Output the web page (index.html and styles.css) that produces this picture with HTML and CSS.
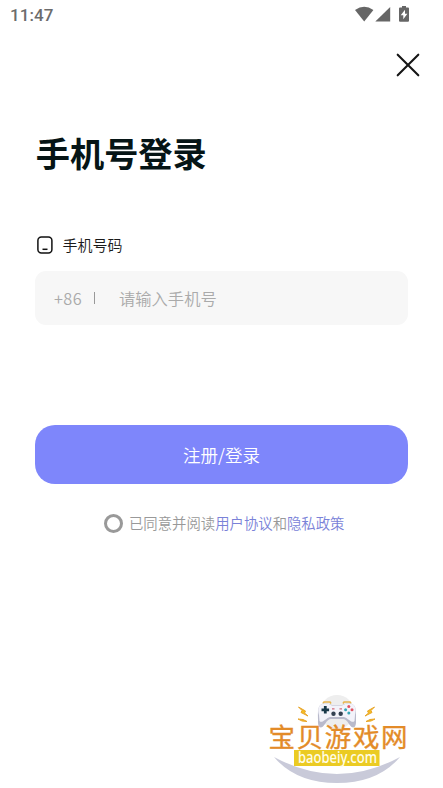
FILE: index.html
```html
<!DOCTYPE html>
<html lang="zh-CN">
<head>
<meta charset="utf-8">
<title>手机号登录</title>
<link rel="stylesheet" href="styles.css">
</head>
<body>
<main class="screen">
  <header class="status">
    <span class="time">11:47</span>
    <svg class="indicators" width="56" height="18" viewBox="0 0 56 18" fill="#666">
      <path d="M0 4.100Q9.200-2.600 18.400 4.100L9.200 15.600Z"/>
      <path d="M20.300 15.600L35.200 .9V15.600Z"/>
      <path d="M47 0h4v1.500h2q1 0 1 1v12.200q0 1-1 1h-8q-1 0-1-1V2.500q0-1 1-1h2z"/>
      <path d="M50 3.700L45.700 9.200H48.300V13.300L52.400 7.800H50Z" fill="#fff"/>
    </svg>
  </header>
  <button class="close" aria-label="关闭">
    <svg width="24" height="24" viewBox="0 0 24 24"><path d="M1.700 1.700L22.300 22.300M22.300 1.700L1.700 22.300" stroke="#161616" stroke-width="2.100" stroke-linecap="round"/></svg>
  </button>
  <h1 class="title">手机号登录</h1>
  <div class="label">
    <svg width="18" height="20" viewBox="0 0 18 20" fill="none" stroke="#111" stroke-width="1.500"><rect x="1.900" y="1.900" width="14" height="16" rx="3.500"/><path d="M6.500 14.300h5"/></svg>
    <span>手机号码</span>
  </div>
  <div class="field">
    <span class="prefix">+86</span>
    <span class="divider"></span>
    <span>请输入手机号</span>
  </div>
  <button class="submit">注册/登录</button>
  <div class="terms">
    <span class="radio"></span>
    <span>已同意并阅读<a>用户协议</a>和<a>隐私政策</a></span>
  </div>
  <svg class="watermark" width="150" height="98" viewBox="265 690 150 98">
    <path d="M274 757Q337 791 400 757Q378 783 337 783Q296 783 274 757Z" fill="#c9cad9"/>
    <circle cx="337" cy="712" r="17" fill="#eee"/>
    <path d="M323 703.500l1-1.500h6l1 1.500M343 703.500l1-1.500h6l1 1.500" stroke="#e8b44c" stroke-width="1.600" fill="none"/>
    <path d="M324 703.500C317 704 318 712 318 720C317.500 728 321 730 325 724Q328 719 331 719H343Q346 719 349 724C353 730 356.500 728 356 720C356 712 357 704 350 703.500Q345 703 342 705H332Q329 703 324 703.500Z" fill="#b9bacb"/>
    <path d="M325 703.500C318 703.500 317.500 710 319 715L319.500 721C322 724 326 718 330 717H344C348 718 352 724 354.500 721L355 715C356.500 710 356 703.500 349 703.500Q345 703.500 342 705.500H332Q329 703.500 325 703.500Z" fill="#f3f3fa"/>
    <path d="M325.300 706v7.600M321.500 709.800h7.600" stroke="#183848" stroke-width="2.800"/>
    <g fill="#334151"><circle cx="333.500" cy="713.800" r="2.200"/><circle cx="340.700" cy="713.800" r="2.200"/></g>
    <path d="M332 708.800h2.500M339.500 708.800h2.500" stroke="#d46a78" stroke-width="1.200"/>
    <g fill="#e35261"><circle cx="348.800" cy="706.500" r="1.500"/><circle cx="352" cy="709.800" r="1.500"/></g>
    <g fill="#36a6b6"><circle cx="345.600" cy="709.800" r="1.500"/><circle cx="348.800" cy="713" r="1.500"/></g>
    <path d="M298.500 707l7 4-1 2 3.500 3-7-3.500 1-2zM298 719l5 .5 4 2-5-.5zM374.500 707l-7 4 1 2-3.500 3 7-3.500-1-2zM375 719l-5 .5-4 2 5-.5z" fill="#f4bd22" stroke="#e9a62b" stroke-width="1"/>
    <text class="brand" x="268.500" y="746.500" textLength="139" lengthAdjust="spacing">宝贝游戏网</text>
    <rect x="294" y="750" width="85.500" height="16" fill="#ebcb23"/>
    <text class="domain" x="298" y="762.500" textLength="79" lengthAdjust="spacingAndGlyphs">baobeiy.com</text>
  </svg>
</main>
</body>
</html>
```
FILE: styles.css
```css
* { box-sizing: border-box; }
body { margin: 0; background: #fff; font-family: "Noto Sans CJK SC", sans-serif; font-weight: 350; }
.screen { position: relative; height: 788px; display: flex; flex-direction: column; padding: 0 35px; overflow: hidden; }
button { border: 0; padding: 0; font-family: inherit; font-weight: inherit; }
.status { height: 30px; margin: 0 -2px 0 -25px; display: flex; justify-content: space-between; align-items: center; flex: none; }
.time { font: 500 17px/20px Roboto, sans-serif; color: #6c6c6c; letter-spacing: .1px; }
.indicators { margin: 0 -1px 1px 0; }
.close { width: 24px; height: 24px; margin: 23px -11.500px 0 0; align-self: flex-end; background: none; }
.close svg { display: block; }
.title { margin: 50px 0 0 .8px; font-size: 34.200px; line-height: 50px; font-weight: 700; color: #061516; }
.label { display: flex; align-items: center; gap: 9px; margin: 58px 0 0 .5px; height: 20px; font-size: 15px; line-height: 20px; color: #1a1a1a; }
.field { display: flex; align-items: center; height: 54px; margin-top: 16px; padding-left: 19px; border-radius: 11px; background: #f7f7f7; color: #aaa; font-size: 16.300px; }
.prefix { width: 40px; font-size: 16.300px; letter-spacing: .4px; }
.divider { width: 1px; height: 12px; margin-right: 24px; background: #999; }
.submit { height: 59px; margin-top: 100px; border-radius: 20px; background: #7e86fb; color: #fff; font-size: 17.500px; line-height: 59px; }
.terms { display: flex; align-items: center; gap: 6px; height: 24px; margin: 27px 0 0 69px; font-size: 14.370px; line-height: 24px; color: #999; white-space: nowrap; }
.terms a { color: #7a82d8; }
.radio { width: 19px; height: 19px; border: 3px solid #999; border-radius: 50%; flex: none; }
.watermark { position: absolute; left: 265px; top: 690px; }
.brand { font-size: 26.500px; font-weight: 400; fill: #e38b28; stroke: #e38b28; stroke-width: .35px; }
.domain { font: 500 16px "Noto Sans", sans-serif; fill: #fffde8; }
```
